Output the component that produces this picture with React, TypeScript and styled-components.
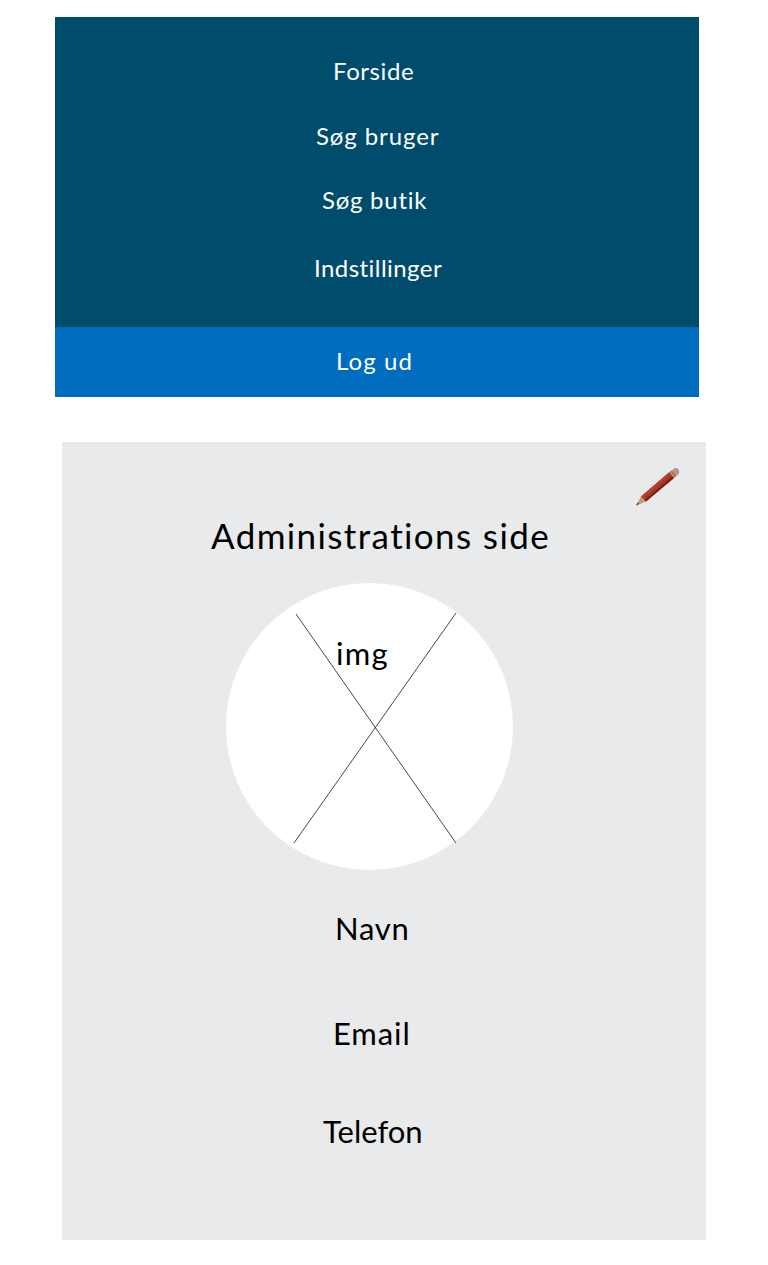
import React from "react";
import styled, { createGlobalStyle } from "styled-components";

const GlobalStyle = createGlobalStyle`
  * { box-sizing: border-box; }
  body { margin: 0; background: #fff; font-family: Lato, "Open Sans", sans-serif; }
`;

const Page = styled.div`
  width: 768px;
  height: 1265px;
  padding-top: 17px;
  display: flex;
  flex-direction: column;
`;

const Menu = styled.nav`
  width: 644px;
  height: 380px;
  margin-left: 55px;
  display: flex;
  flex-direction: column;
  background: #004c6d;
`;

const MenuItems = styled.div`
  height: 310px;
  padding-top: 39px;
`;

const MenuLink = styled.a<{ $left: number; $gap?: number; $spacing: number }>`
  display: block;
  height: 30px;
  line-height: 30px;
  padding-left: ${(p) => p.$left}px;
  margin-bottom: ${(p) => p.$gap ?? 0}px;
  color: #fff;
  font-size: 24px;
  letter-spacing: ${(p) => p.$spacing}px;
  white-space: nowrap;
`;

const LogoutBar = styled.div`
  height: 70px;
  padding-top: 19px;
  background: #006cbe;
`;

const Card = styled.main`
  width: 644px;
  height: 798px;
  margin: 45px 0 0 62px;
  display: flex;
  flex-direction: column;
  background: #e8eaeb;
`;

const EditButton = styled.div`
  height: 68px;
  padding: 24px 26px 0 0;
  display: flex;
  justify-content: flex-end;
`;

const Title = styled.h1`
  margin: 0 0 23px;
  height: 50px;
  line-height: 50px;
  padding-left: 149px;
  font-size: 35px;
  font-weight: 400;
  letter-spacing: 1.38px;
  white-space: nowrap;
`;

const Avatar = styled.div`
  position: relative;
  width: 287px;
  height: 287px;
  margin-left: 164px;
  flex: none;
  border-radius: 50%;
  background: #fff;
  padding: 50px 0 0 110px;
  font-size: 31px;
  line-height: 40px;
  letter-spacing: 1.3px;
`;

const Cross = styled.svg`
  position: absolute;
  inset: 0;
`;

const Fields = styled.div`
  padding-top: 38px;
`;

const Field = styled.div<{ $left: number; $gap?: number; $spacing: number }>`
  height: 40px;
  line-height: 40px;
  padding-left: ${(p) => p.$left}px;
  margin-bottom: ${(p) => p.$gap ?? 0}px;
  font-size: 31px;
  letter-spacing: ${(p) => p.$spacing}px;
`;

const Pencil = () => (
  <svg width="46" height="42" viewBox="634 466 46 42">
    <path d="M636 505.5 L641 496.5 L646 501.5 Z" fill="#c59b72" />
    <path d="M636 505.7 L637.6 502.4 L639.3 504 Z" fill="#4d4543" />
    <path d="M641 496.5 L669.5 472 L674 478 L646 501.5 Z" fill="#a93827" />
    <path d="M641 496.5 L669.5 472 L671 473.8 L642.6 498.2 Z" fill="#b9412e" />
    <path d="M644.4 500 L672.5 476.2 L674 478 L646 501.5 Z" fill="#75251d" />
    <path d="M669.5 472 L673 469.2 L677.8 474.8 L674 478 Z" fill="#b98e70" />
    <path d="M671 471 L675.5 476.6" stroke="#77594b" strokeWidth="0.8" />
    <path d="M673 469.2 Q676 466.7 678.4 469.4 Q680.3 472.4 677.8 474.8 Z" fill="#cb858d" />
  </svg>
);

export default function App() {
  return (
    <>
      <GlobalStyle />
      <Page>
        <Menu>
          <MenuItems>
            <MenuLink $left={278} $gap={35} $spacing={0.6}>Forside</MenuLink>
            <MenuLink $left={261} $gap={34} $spacing={0.9}>Søg bruger</MenuLink>
            <MenuLink $left={267} $gap={38} $spacing={0.75}>Søg butik</MenuLink>
            <MenuLink $left={259} $spacing={0.45}>Indstillinger</MenuLink>
          </MenuItems>
          <LogoutBar>
            <MenuLink $left={281} $spacing={1.1}>Log ud</MenuLink>
          </LogoutBar>
        </Menu>
        <Card>
          <EditButton>
            <Pencil />
          </EditButton>
          <Title>Administrations side</Title>
          <Avatar>
            img
            <Cross width="287" height="287" viewBox="226 583 287 287" stroke="#333" strokeWidth="0.9">
              <path d="M296 614 L456 843 M456 613 L294 843" />
            </Cross>
          </Avatar>
          <Fields>
            <Field $left={273} $gap={65} $spacing={0.7}>Navn</Field>
            <Field $left={271} $gap={58} $spacing={0.9}>Email</Field>
            <Field $left={261} $spacing={0}>Telefon</Field>
          </Fields>
        </Card>
      </Page>
    </>
  );
}
